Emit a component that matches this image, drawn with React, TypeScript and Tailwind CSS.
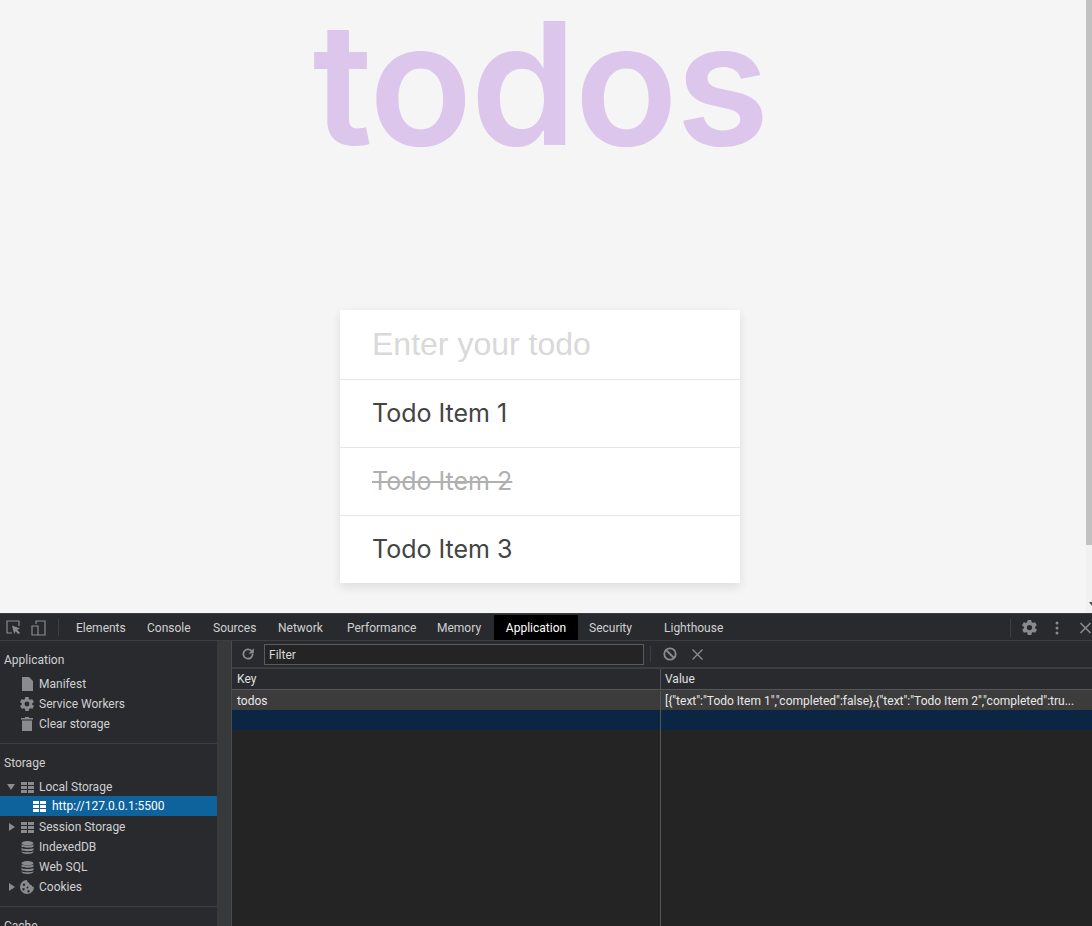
import { ReactNode } from 'react';

const tabs = [
  { label: 'Elements', className: 'w-[71px] pl-[11px]' },
  { label: 'Console', className: 'w-[66px] pl-[11px]' },
  { label: 'Sources', className: 'w-[65px] pl-[11px]' },
  { label: 'Network', className: 'w-[69px] pl-[11px]' },
  { label: 'Performance', className: 'w-[90px] pl-[11px]' },
  { label: 'Memory', className: 'w-[68px] pl-[11px]' },
  { label: 'Application', className: 'w-[84px] justify-center bg-black text-white' },
  { label: 'Security', className: 'w-[75px] pl-[11px]' },
  { label: 'Lighthouse', className: 'w-[80px] pl-[11px]' },
];

function GridIcon({ color = '#8a8b8d', className = '' }: { color?: string; className?: string }) {
  return (
    <svg width="13" height="11" viewBox="0 0 13 11" className={className}>
      <path fill={color} d="M0 0h6v3H0zM7 0h6v3H7zM0 4h6v3H0zM7 4h6v3H7zM0 8h6v3H0zM7 8h6v3H7z" />
    </svg>
  );
}

function DbIcon() {
  return (
    <svg width="13" height="13" viewBox="0 0 13 13">
      <ellipse cx="6.5" cy="2.2" rx="6" ry="2.2" fill="#8a8b8d" />
      <path fill="#8a8b8d" d="M.5 3.6c1 1.4 11 1.4 12 0v2c-1 1.6-11 1.6-12 0zM.5 7c1 1.4 11 1.4 12 0v2c-1 1.6-11 1.6-12 0zM.5 10.2c1 1.4 11 1.4 12 0v.8c-1 2.6-11 2.6-12 0z" />
    </svg>
  );
}

function Arrow({ open }: { open?: boolean }) {
  return open ? (
    <svg width="8" height="6" viewBox="0 0 8 6"><path fill="#8a8b8d" d="M0 0h8L4 6z" /></svg>
  ) : (
    <svg width="6" height="8" viewBox="0 0 6 8"><path fill="#8a8b8d" d="M0 0v8l6-4z" /></svg>
  );
}

function FileIcon() {
  return (
    <svg width="11" height="14" viewBox="0 0 11 14"><path fill="#8a8b8d" d="M0 0h7l4 4v10H0z" /></svg>
  );
}

function GearIcon({ size = 15, color = '#8a8b8d' }: { size?: number; color?: string }) {
  return (
    <svg width={size} height={size} viewBox="2 2 20 20">
      <path
        fill={color}
        fillRule="evenodd"
        d="M19.4 13c.1-.3.1-.7.1-1s0-.7-.1-1l2.1-1.6c.2-.2.2-.4.1-.6l-2-3.5c-.1-.2-.4-.3-.6-.2l-2.5 1c-.5-.4-1.1-.7-1.7-1l-.4-2.6c0-.3-.2-.5-.5-.5h-4c-.3 0-.5.2-.5.4l-.4 2.7c-.6.2-1.1.6-1.7 1l-2.5-1c-.2-.1-.5 0-.6.2l-2 3.5c-.1.2-.1.4.1.6L4.6 11c-.1.3-.1.7-.1 1s0 .7.1 1l-2.1 1.6c-.2.2-.2.4-.1.6l2 3.5c.1.2.4.3.6.2l2.5-1c.5.4 1.1.7 1.7 1l.4 2.6c0 .3.2.5.5.5h4c.3 0 .5-.2.5-.4l.4-2.7c.6-.2 1.2-.6 1.7-1l2.5 1c.2.1.5 0 .6-.2l2-3.5c.1-.2.1-.4-.1-.6zM12 15.5a3.5 3.5 0 1 1 0-7 3.5 3.5 0 0 1 0 7z"
      />
    </svg>
  );
}

function TrashIcon() {
  return (
    <svg width="12" height="14" viewBox="0 0 12 14">
      <path fill="#8a8b8d" d="M4 0h4v1h4v1.500H0V1h4zM1 3.500h10V14H1z" />
    </svg>
  );
}

function CookieIcon() {
  return (
    <svg width="14" height="14" viewBox="0 0 14 14">
      <path
        fill="#8a8b8d"
        fillRule="evenodd"
        d="M7 0a7 7 0 1 0 7 7c-1.400 0-2-.8-2.200-1.800C10.400 5.200 9 4.300 9 2.800 7.800 2.600 7 1.400 7 0zM4 3.500a1.200 1.200 0 1 1 0 2.400 1.200 1.200 0 0 1 0-2.400zM3.500 8a1.200 1.200 0 1 1 0 2.400 1.200 1.200 0 0 1 0-2.400zM7.500 6.500a1 1 0 1 1 0 2 1 1 0 0 1 0-2zM8.500 10a1.200 1.200 0 1 1 0 2.400 1.200 1.200 0 0 1 0-2.400z"
      />
    </svg>
  );
}

function SideRow({ icon, label, arrow, open }: { icon: ReactNode; label: string; arrow?: boolean; open?: boolean }) {
  return (
    <div className="flex h-5 items-center">
      <div className="flex w-[17px] justify-end pr-[2px]">
        {arrow && <Arrow open={open} />}
      </div>
      <div className="flex w-[22px] justify-center pr-[2px]">{icon}</div>
      <span>{label}</span>
    </div>
  );
}

function Devtools() {
  return (
    <div className="flex h-[313px] shrink-0 flex-col overflow-hidden border-t border-[#3d3e40] bg-[#292a2d] font-['Roboto',sans-serif] text-[12px] text-[#d0d1d2]">
      {/* Tab bar */}
      <div className="flex h-[27px] shrink-0 items-stretch border-b border-[#3d3e40] pt-px">
        <div className="flex w-[59px] shrink-0 items-center gap-[10px] pl-[6px]">
          <svg width="15" height="15" viewBox="0 0 15 15" fill="none">
            <path stroke="#8a8b8d" strokeWidth="1.2" d="M6 13H1V1h12v5" />
            <path fill="#8a8b8d" d="M6 5.500l8 3-3 1.300 3 3-1.500 1.500-3-3L8.200 14z" />
          </svg>
          <svg width="15" height="16" viewBox="0 0 15 16" fill="none">
            <path stroke="#8a8b8d" strokeWidth="1.2" d="M5 4V1h9v14H5M1 6h6v9H1z" />
          </svg>
        </div>
        <div className="my-[4px] -ml-px w-px bg-[#3d3e40]" />
        <div className="flex items-stretch pl-[6px]">
          {tabs.map((tab) => (
            <div key={tab.label} className={`flex items-center ${tab.className}`}>
              {tab.label}
            </div>
          ))}
        </div>
        <div className="ml-auto flex items-center">
          <div className="h-[18px] w-px bg-[#3d3e40]" />
          <div className="flex w-[37px] justify-center"><GearIcon size={15} /></div>
          <svg width="4" height="14" viewBox="0 0 4 14" className="ml-[7px]">
            <circle cx="2" cy="2" r="1.500" fill="#8a8b8d" />
            <circle cx="2" cy="7" r="1.500" fill="#8a8b8d" />
            <circle cx="2" cy="12" r="1.500" fill="#8a8b8d" />
          </svg>
          <svg width="13" height="12" viewBox="0 0 12 12" className="ml-[20px]">
            <path stroke="#8a8b8d" strokeWidth="1.600" d="M1 1l10 10M11 1L1 11" />
          </svg>
        </div>
      </div>

      <div className="flex min-h-0 flex-1">
        {/* Sidebar */}
        <div className="w-[217px] shrink-0 pt-[9px]">
          <div className="flex h-5 items-center pl-1">Application</div>
          <div className="mt-[4px]">
            <SideRow icon={<FileIcon />} label="Manifest" />
            <SideRow icon={<GearIcon size={14} />} label="Service Workers" />
            <SideRow icon={<TrashIcon />} label="Clear storage" />
          </div>
          <div className="mt-[9px] h-px bg-[#3d3e40]" />
          <div className="mt-[9px] flex h-5 items-center pl-1">Storage</div>
          <div className="mt-[4px]">
            <SideRow icon={<GridIcon />} label="Local Storage" arrow open />
            <div className="-mt-px mb-px flex h-5 items-center bg-[#0e639c] pl-[33px] text-white">
              <GridIcon color="#ffffff" className="mr-[6px]" />
              <span>http://127.0.0.1:5500</span>
            </div>
            <SideRow icon={<GridIcon />} label="Session Storage" arrow />
            <SideRow icon={<DbIcon />} label="IndexedDB" />
            <SideRow icon={<DbIcon />} label="Web SQL" />
            <SideRow icon={<CookieIcon />} label="Cookies" arrow />
          </div>
          <div className="mt-[9px] h-px bg-[#3d3e40]" />
          <div className="mt-[9px] flex h-5 items-center pl-1">Cache</div>
        </div>
        <div className="w-[15px] shrink-0 border-r border-[#4a4b4d] bg-[#38393b]" />

        {/* Storage table */}
        <div className="flex min-w-0 flex-1 flex-col">
          <div className="flex h-[28px] shrink-0 items-center border-b-2 border-[#3d3e40] pl-[9px]">
            <svg width="14" height="14" viewBox="0 0 24 24" fill="none" className="mr-[9px]">
              <path stroke="#8a8b8d" strokeWidth="3" d="M20 12a8 8 0 1 1-2.400-5.700L20 8.500" />
              <path fill="#8a8b8d" d="M22 2v9h-9z" />
            </svg>
            <div className="flex h-[21px] w-[380px] items-center border border-[#5a5b5d] bg-[#242424] pl-1 pt-px text-[#d8d8d8]">Filter</div>
            <div className="ml-[6px] h-[16px] w-px bg-[#3d3e40]" />
            <svg width="14" height="14" viewBox="0 0 14 14" fill="none" className="ml-[12px]">
              <circle cx="7" cy="7" r="5.700" stroke="#8a8b8d" strokeWidth="1.800" />
              <path stroke="#8a8b8d" strokeWidth="1.800" d="M3 3l8 8" />
            </svg>
            <svg width="11" height="11" viewBox="0 0 11 11" className="ml-[15px]">
              <path stroke="#8a8b8d" strokeWidth="1.400" d="M.5.5l10 10M10.500.5l-10 10" />
            </svg>
          </div>

          <div className="flex h-[21px] shrink-0 items-center border-b border-[#55565a] text-[#e0e0e0]">
            <div className="w-[428px] shrink-0 pl-[5px]">Key</div>
            <div className="h-full w-px bg-[#55565a]" />
            <div className="pl-1">Value</div>
          </div>

          <div className="flex h-5 shrink-0 items-center bg-[#3c3c3c] pt-px text-[#e8e8e8]">
            <div className="w-[428px] shrink-0 pl-[5px]">todos</div>
            <div className="h-full w-px bg-[#55565a]" />
            <div className="overflow-hidden whitespace-nowrap pl-1">{'[{"text":"Todo Item 1","completed":false},{"text":"Todo Item 2","completed":tru...'}</div>
          </div>
          <div className="flex h-5 shrink-0 bg-[#0a2643]">
            <div className="w-[428px] shrink-0" />
            <div className="h-full w-px bg-[#55565a]" />
          </div>
          <div className="flex flex-1 bg-[#242424]">
            <div className="w-[428px] shrink-0" />
            <div className="h-full w-px bg-[#55565a]" />
          </div>
        </div>
      </div>
    </div>
  );
}

function TodoRow({ text, done }: { text: string; done?: boolean }) {
  return (
    <li className={`flex h-[68px] items-center border-t border-[#e6e6e6] pl-[32px] text-[25px] ${done ? 'text-[#b0b0b0] line-through' : 'text-[#444444]'}`}>
      {text}
    </li>
  );
}

export default function App() {
  return (
    <div className="flex h-[926px] w-[1092px] flex-col overflow-hidden">
      <div className="flex min-h-0 flex-1 bg-[#f5f5f5]">
        <main className="flex min-w-0 flex-1 flex-col items-center pr-[6px] font-['Inter',sans-serif]">
          <h1 className="h-[310px] text-[170px] font-semibold leading-[166px] tracking-[-2px] text-[#dcc6ec]">todos</h1>
          <div className="w-[400px] bg-white shadow-[0_4px_10px_rgba(0,0,0,0.1)]">
            <div className="flex h-[69px] items-center pb-[2px] pl-[32px] font-['Liberation_Sans',sans-serif] text-[32px] text-[#d9d9d9]">
              Enter your todo
            </div>
            <ul>
              <TodoRow text="Todo Item 1" />
              <TodoRow text="Todo Item 2" done />
              <TodoRow text="Todo Item 3" />
            </ul>
          </div>
        </main>
        <div className="flex w-[6px] shrink-0 flex-col items-end bg-[#f1f1f1]">
          <div className="h-[545px] w-full bg-[#c1c1c1]" />
          <svg width="3" height="4" viewBox="0 0 3 4" className="mt-[57px]">
            <path fill="#505050" d="M0 0h3v4z" />
          </svg>
        </div>
      </div>
      <Devtools />
    </div>
  );
}
